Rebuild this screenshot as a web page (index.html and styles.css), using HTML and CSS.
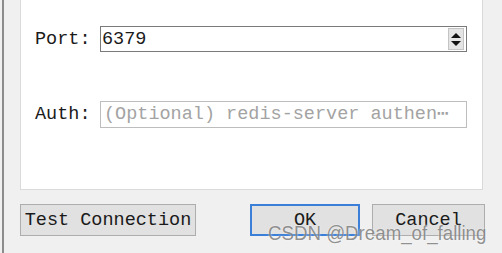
FILE: index.html
```html
<!DOCTYPE html>
<html lang="en">
<head>
    <meta charset="UTF-8" />
    <title>Connection Settings</title>
    <link rel="stylesheet" href="styles.css">
</head>
<body>
    <div class="window">
        <!-- Connection form panel -->
        <div class="panel">
            <div class="form-row">
                <label class="field-label" for="port">Port:</label>
                <div class="spin-box">
                    <input type="text" id="port" class="spin-input" value="6379" />
                    <div class="spin-buttons">
                        <span class="arrow-up"></span>
                        <span class="arrow-down"></span>
                    </div>
                </div>
            </div>

            <div class="form-row auth-row">
                <label class="field-label" for="auth">Auth:</label>
                <div class="text-box" id="auth">(Optional) redis-server authen⋯</div>
            </div>
        </div>

        <!-- Dialog buttons -->
        <div class="button-row">
            <button class="btn btn-test">Test Connection</button>
            <div class="button-group">
                <button class="btn btn-ok">OK</button>
                <button class="btn btn-cancel">Cancel</button>
            </div>
        </div>
    </div>

    <div class="watermark">CSDN @Dream_of_falling</div>
</body>
</html>
```

FILE: styles.css
```css
body {
    margin: 0;
    background-color: #f0f0f0;
    font-family: 'Liberation Mono', monospace;
    font-size: 18.5px;
    color: #1a1a1a;
    height: 253px;
    overflow: hidden;
    position: relative;
}

.window {
    margin-left: 2px;
    border-left: 2px solid #8c8c8c;
    padding-left: 16px;
    height: 253px;
    box-sizing: border-box;
}

.panel {
    width: 463px;
    height: 190px;
    box-sizing: border-box;
    background-color: #ffffff;
    border: 1px solid #dadada;
    border-top: none;
    padding: 26px 0 0 14px;
}

.form-row {
    display: flex;
    align-items: center;
}

.auth-row {
    margin-top: 49px;
}

.field-label {
    width: 65px;
}

.spin-box {
    width: 367px;
    height: 26px;
    box-sizing: border-box;
    border: 1px solid #7a7a7a;
    display: flex;
    align-items: center;
    background-color: #fff;
}

.spin-input {
    flex: 1;
    border: none;
    outline: none;
    font-family: inherit;
    font-size: inherit;
    padding: 0 0 0 1px;
    color: #1a1a1a;
    background: transparent;
}

.spin-buttons {
    width: 16px;
    height: 22px;
    margin-right: 2px;
    background-color: #e4e4e4;
    border: 1px solid #c4c4c4;
    box-sizing: border-box;
    display: flex;
    flex-direction: column;
    align-items: center;
    justify-content: center;
    gap: 3px;
}

.arrow-up {
    width: 0;
    height: 0;
    border-left: 5px solid transparent;
    border-right: 5px solid transparent;
    border-bottom: 5px solid #111;
}

.arrow-down {
    width: 0;
    height: 0;
    border-left: 5px solid transparent;
    border-right: 5px solid transparent;
    border-top: 5px solid #111;
}

.text-box {
    width: 367px;
    height: 27px;
    box-sizing: border-box;
    border: 1px solid #bdbdbd;
    color: #a3a3a3;
    padding-left: 3px;
    line-height: 25px;
    white-space: nowrap;
    overflow: hidden;
}

.button-row {
    display: flex;
    justify-content: space-between;
    width: 465px;
    margin-top: 14px;
}

.button-group {
    display: flex;
    gap: 12px;
}

.btn {
    height: 32px;
    background-color: #e1e1e1;
    border: 1px solid #adadad;
    font-family: 'Liberation Mono', monospace;
    font-size: 18.5px;
    color: #1a1a1a;
    padding: 0;
    cursor: pointer;
}

.btn-test {
    width: 176px;
}

.btn-ok {
    width: 110px;
    border: 2px solid #3b7fd9;
}

.btn-cancel {
    width: 113px;
}

.watermark {
    position: absolute;
    left: 268px;
    top: 221px;
    font-family: 'Liberation Sans', Arial, sans-serif;
    font-size: 21px;
    color: rgba(110, 110, 110, 0.75);
    text-shadow: 0 0 2px rgba(255, 255, 255, 0.8);
    white-space: nowrap;
    transform: scaleX(0.89);
    transform-origin: left top;
}
```
